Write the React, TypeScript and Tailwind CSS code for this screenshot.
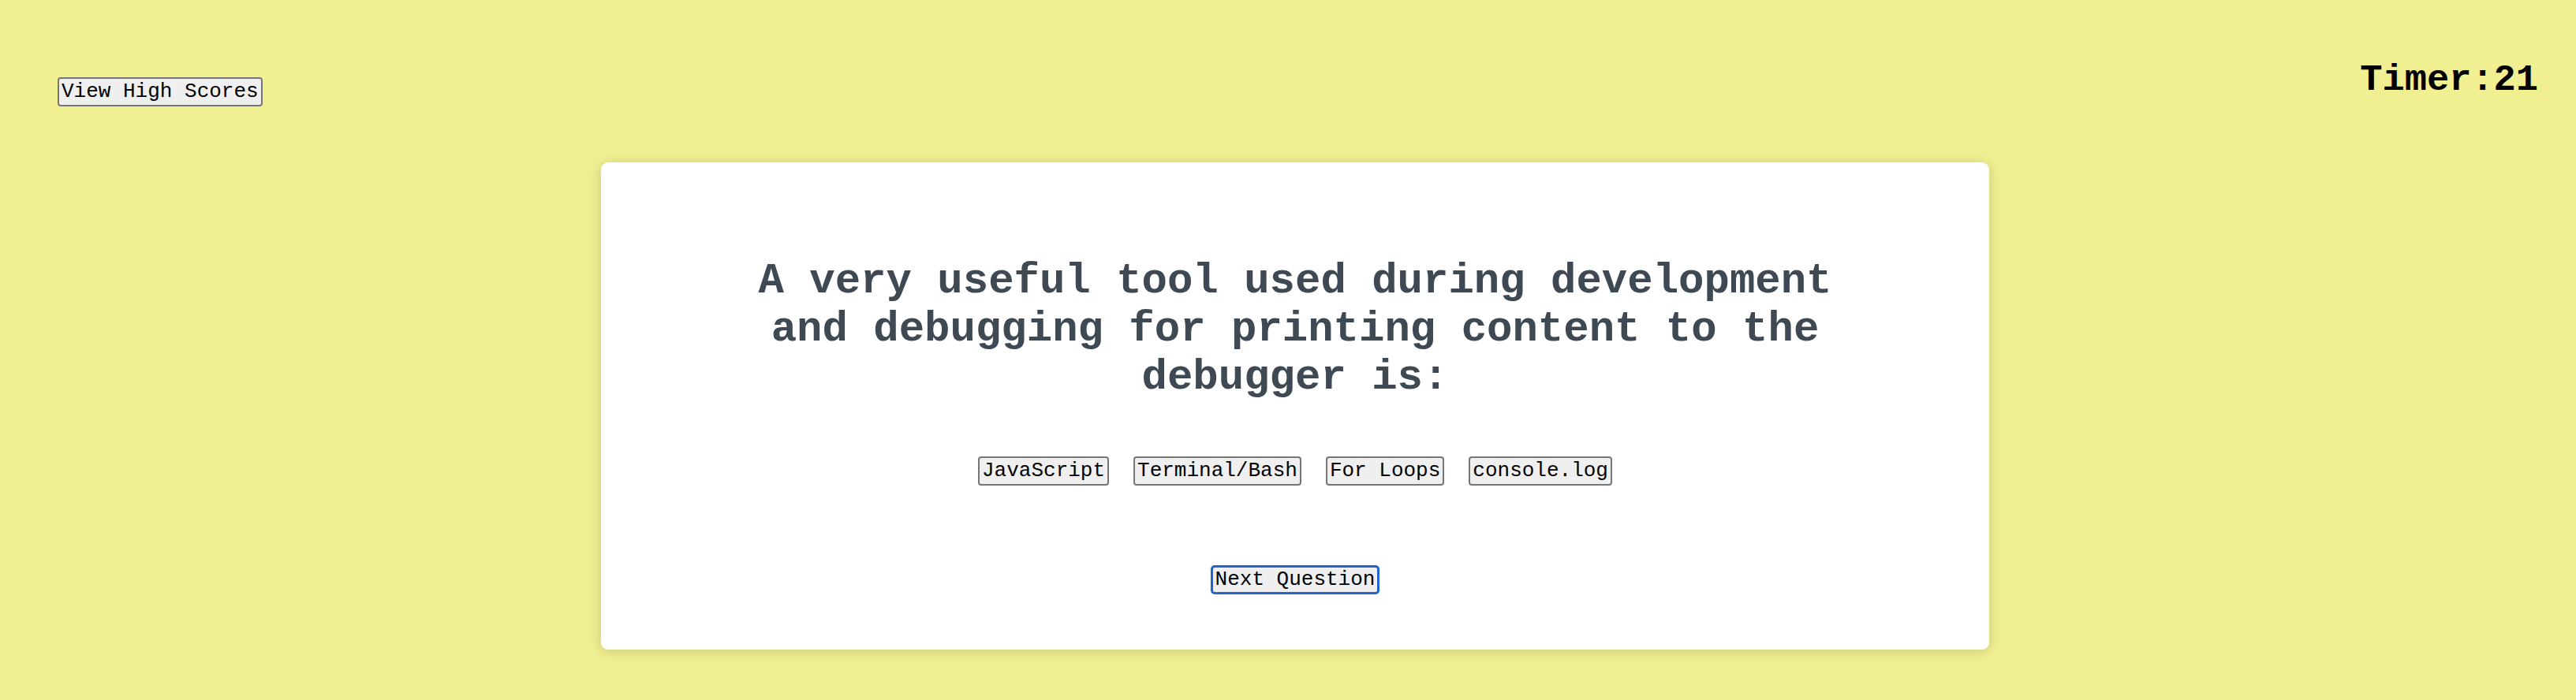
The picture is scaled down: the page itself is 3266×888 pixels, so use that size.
const choices = ["JavaScript", "Terminal/Bash", "For Loops", "console.log"] as const;

const mono = "font-['Liberation_Mono','Courier_New',monospace]";

export default function App() {
  return (
    <div className={`min-h-[888px] bg-[#f0ef91] ${mono}`}>
      <header className="flex items-start justify-between pl-[73px] pr-[48px] pt-[75px]">
        <button className="mt-[23px] rounded-[4px] border-2 border-[#767676] bg-[#efefef] px-[3px] py-[2px] text-[26px] leading-[29px] text-black">
          View High Scores
        </button>
        <div className="text-[47px] font-bold leading-[53px] text-black">Timer:21</div>
      </header>

      <main className="ml-[762px] mt-[71px] w-[1760px] rounded-[9px] bg-white pb-[70px] pt-[120px] shadow-[0_2px_16px_rgba(0,0,0,0.16)]">
        <h2 className="mx-auto w-[1408px] text-center text-[54px] font-bold leading-[61px] text-[#3e4954]">
          A very useful tool used during development and debugging for printing content to the debugger is:
        </h2>
        <ul className="mt-[70px] flex justify-center gap-[31px]">
          {choices.map((choice) => (
            <li key={choice}>
              <button className="rounded-[4px] border-2 border-[#767676] bg-[#efefef] px-[3px] py-[2px] text-[26px] leading-[29px] text-black">
                {choice}
              </button>
            </li>
          ))}
        </ul>
        <div className="mt-[101px] flex justify-center">
          <button className="rounded-[5px] border-[3px] border-[#2164cc] bg-[#efefef] px-[3px] py-[1px] text-[26px] leading-[29px] text-black">
            Next Question
          </button>
        </div>
      </main>
    </div>
  );
}
